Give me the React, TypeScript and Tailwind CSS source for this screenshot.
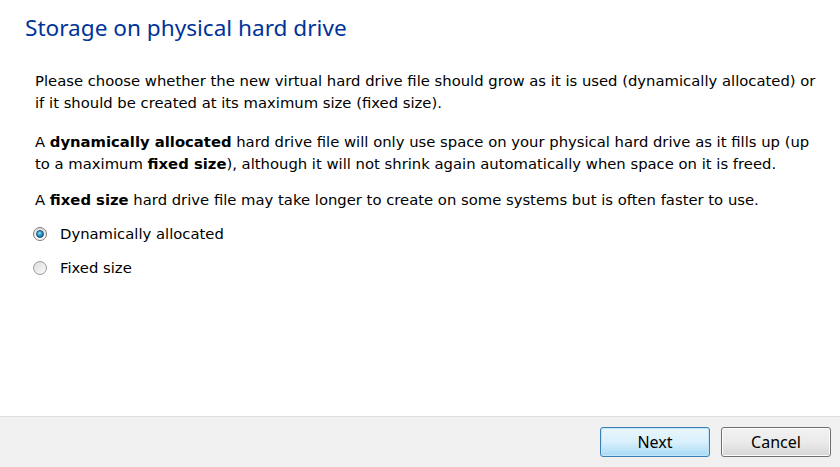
export default function App() {
  return (
    <div className="flex h-[467px] w-[840px] flex-col bg-white">
      <main className="flex-1">
        <h1 className="pl-[25px] pt-[13px] text-[22.6px] leading-[30px] text-[#003399] [font-family:'Noto_Sans',sans-serif]">
          Storage on physical hard drive
        </h1>
        <div className="whitespace-nowrap pl-[35px] pt-[27px] text-[14.8px] leading-[22px] text-black [font-family:'DejaVu_Sans',sans-serif]">
          <p>
            Please choose whether the new virtual hard drive file should grow as it is used (dynamically allocated) or
            <br />
            if it should be created at its maximum size (fixed size).
          </p>
          <p className="mt-[17px]">
            A <b>dynamically allocated</b> hard drive file will only use space on your physical hard drive as it fills up (up
            <br />
            to a maximum <b>fixed size</b>), although it will not shrink again automatically when space on it is freed.
          </p>
          <p className="mt-[14px]">
            A <b>fixed size</b> hard drive file may take longer to create on some systems but is often faster to use.
          </p>
        </div>
        <div className="mt-[12px] flex flex-col gap-[12px] pl-[33px] text-[14.8px] leading-[22px] [font-family:'DejaVu_Sans',sans-serif]">
          <label className="flex items-center gap-[13px]">
            <span className="flex h-[14px] w-[14px] items-center justify-center rounded-full border border-[#7a7a7a] bg-gradient-to-b from-[#e0e0e0] to-[#ffffff]">
              <span className="h-[8px] w-[8px] rounded-full border border-[#184e70] bg-[radial-gradient(circle_at_40%_35%,#8fdcf8,#1a8bc4_55%,#0d4f78)]" />
            </span>
            Dynamically allocated
          </label>
          <label className="flex items-center gap-[13px]">
            <span className="h-[14px] w-[14px] rounded-full border border-[#9a9a9a] bg-gradient-to-br from-[#dcdcdc] to-[#fafafa]" />
            Fixed size
          </label>
        </div>
      </main>
      <footer className="flex h-[51px] items-center justify-end gap-[11px] border-t border-[#dfdfdf] bg-[#f0f0f0] pr-[9px] text-[16px] [font-family:'Noto_Sans',sans-serif]">
        <button className="h-[30px] w-[110px] rounded-[3px] border border-[#3c7fb1] bg-gradient-to-b from-[#eaf6fd] via-[#d9f0fc] to-[#a7d9f5] shadow-[inset_0_0_0_1px_#bfe6fb] text-black">
          Next
        </button>
        <button className="h-[30px] w-[110px] rounded-[3px] border border-[#707070] bg-gradient-to-b from-[#f2f2f2] via-[#ebebeb] to-[#d6d6d6] shadow-[inset_0_0_0_1px_#fcfcfc] text-black">
          Cancel
        </button>
      </footer>
    </div>
  );
}
